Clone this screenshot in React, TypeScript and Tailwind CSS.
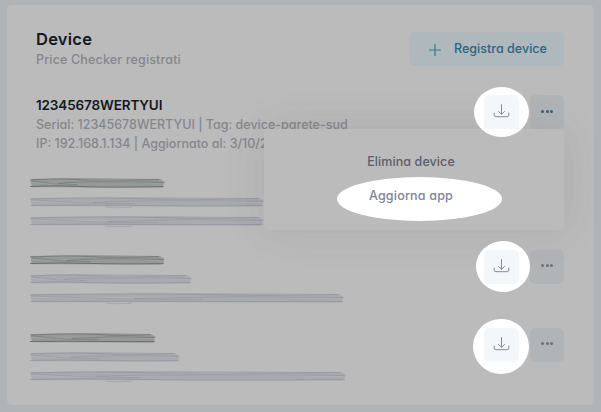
import React from "react";

type Streak = { end: number; y: number; dark?: boolean; seed: number };

const streaks: Streak[][] = [
  [
    { end: 165, y: 178, dark: true, seed: 0 },
    { end: 264, y: 198, seed: 1 },
    { end: 264, y: 216, seed: 2 },
  ],
  [
    { end: 165, y: 255, dark: true, seed: 1 },
    { end: 192, y: 275, seed: 0 },
    { end: 344, y: 294, seed: 2 },
  ],
  [
    { end: 156, y: 333, dark: true, seed: 2 },
    { end: 180, y: 353, seed: 1 },
    { end: 346, y: 371, seed: 0 },
  ],
];

/* Redacted line, brushed over with a few overlapping strokes. */
function Scribble({ end, dark, seed }: Streak) {
  const w = end - 30;
  const base = dark ? "#8f9392" : "#a5a7ab";
  const line = dark ? "#5b605e" : "#868993";
  const light = dark ? "#a0a5a4" : "#b1b3b7";
  const m = w * (0.35 + seed * 0.1);
  return (
    <svg width={w} height="13" viewBox={`0 0 ${w} 13`} className="block overflow-visible" fill="none">
      <g className="blur-[0.4px]">
        <path d={`M0 1 L${m} 0 L${w - 5} 1 L${w} 4 L${w - 3} 9.4 L2 9.2 L1 5Z`} fill={base} opacity="0.85" />
        <path d={`M1 2 Q${m * 0.6} 0 ${m} 1.6 T${w - 6} 1.5`} stroke={line} opacity="0.5" />
        <path d={`M2 4 Q${m * 0.5} ${8 - seed} ${m} 4.5 T${w - 4} 5.5`} stroke={light} strokeWidth="1.6" opacity="0.8" />
        <path d={`M${m * 0.6} 5.5 Q${m * 1.2} 2.5 ${w - 2} 4.5`} stroke={line} opacity="0.5" />
        <path d={`M0 8.5 Q${m * 0.5} ${7 + seed * 0.5} ${m} 8.4 T${w - 1} 8.6`} stroke={line} opacity={dark ? 0.75 : 0.5} />
        <path d={`M2 3 Q${m * 0.5} 7 ${m} 6.5`} stroke={line} opacity="0.4" />
        {w > 200 && <path d={`M75 10 Q88 11.5 102 10.2`} stroke={line} opacity="0.4" />}
      </g>
    </svg>
  );
}

function DownloadIcon() {
  return (
    <svg width="17" height="16" viewBox="0 0 17 16" fill="none" stroke="#858c99" strokeWidth="1" strokeLinecap="round" strokeLinejoin="round">
      <path d="M8.5 1.5V11M5.5 8.5L8.5 11.2L11.5 8.5" />
      <path d="M1.2 10V12Q1.2 13.7 2.9 13.7H14.1Q15.8 13.7 15.8 12V10" />
    </svg>
  );
}

function Actions({ spot, active }: { spot: string; active?: boolean }) {
  return (
    <div className="flex gap-[11px]">
      <div className="relative z-20 h-[34px] w-[35px]">
        <span className={`absolute rounded-[50%] bg-white ${spot}`} />
        <button className={`relative flex h-full w-full items-center justify-center bg-[#f4f7fa] pb-[2px] ${active ? "rounded-t-[5px]" : "rounded-[5px]"}`}>
          <DownloadIcon />
        </button>
      </div>
      <button className={`flex h-[34px] w-[34px] items-center justify-center gap-[1.5px] rounded-[5px] bg-[#b1b4b7] ${active ? "pb-[1px]" : "pb-[3px]"}`}>
        {[0, 1, 2].map((n) => (
          <span key={n} className={`h-[3px] w-[3px] rounded-full ${active ? "bg-[#2c6380]" : "bg-[#6b707a]"}`} />
        ))}
      </button>
    </div>
  );
}

export default function App() {
  return (
    <main className="h-[412px] w-[601px] overflow-hidden bg-[#b0b4b7] pl-[7px] pt-[5px] font-['Inter',sans-serif] [font-feature-settings:'cv11']">
      <section className="relative h-[400px] w-[587px] rounded-[5px] bg-[#bbbbbb] pl-[29px] pr-[30px] pt-[27px]">
        <header className="flex h-[63px] items-start justify-between">
          <div className="whitespace-nowrap">
            <h1 className="-mt-[3px] text-[16.5px] font-semibold leading-[21px] tracking-[0.25px] text-[#14191f]">Device</h1>
            <p className="text-[12.5px] font-medium leading-[19px] tracking-[0.16px] text-[#85868c]">Price Checker registrati</p>
          </div>
          <button className="flex h-[34px] w-[155px] items-center whitespace-nowrap rounded-[5px] bg-[#afb8bc] pl-[20px] text-[12.5px] font-medium tracking-[0.03px] text-[#2a6584]">
            <svg width="12" height="12" viewBox="0 0 12 12" className="mr-[13px] mt-[1px] shrink-0" stroke="#2a7896" strokeWidth="1.2">
              <path d="M0 6H12M6 0V12" />
            </svg>
            Registra device
          </button>
        </header>

        <div className="flex h-[78px] justify-between">
          <div className="whitespace-nowrap">
            <h2 className="text-[13.5px] font-semibold leading-[20px] tracking-[-0.13px] text-[#14191f]">12345678WERTYUI</h2>
            <p className="text-[12.5px] font-medium leading-[19px] text-[#85868c]">Serial: 12345678WERTYUI | Tag: device-parete-sud</p>
            <p className="text-[12.5px] font-medium leading-[19px] text-[#85868c]">IP: 192.168.1.134 | Aggiornato al: 3/10/2023</p>
          </div>
          <Actions active spot="-left-[10px] -top-[8px] h-[50px] w-[55px]" />
        </div>

        {streaks.map((lines, i) => (
          <div key={i} className={`flex justify-between ${i === 0 ? "h-[77px]" : "h-[78px]"}`}>
            <div className="-ml-[6px] flex flex-col gap-[6px] pt-[5px]">
              {lines.map((l) => (
                <Scribble key={l.y} {...l} />
              ))}
            </div>
            {i > 0 && <Actions spot={i === 1 ? "-left-[8px] -top-[9px] h-[51px] w-[54px]" : "-left-[11px] -top-[9px] h-[55px] w-[56px]"} />}
          </div>
        ))}

        <div className="absolute left-[257px] top-[124px] z-10 flex h-[101px] w-[300px] flex-col items-center rounded-[5px] rounded-tl-none bg-[#bbbbbb] pt-[23px] shadow-[0_0_42px_rgba(72,67,82,0.12)]">
          <span className="mr-[6px] whitespace-nowrap text-[12.5px] font-medium leading-[20px] tracking-[0.09px] text-[#5d5e69]">Elimina device</span>
          <div className="ml-[11px] mt-[5px] flex h-[44px] w-[165px] shrink-0 justify-center rounded-[50%] bg-white pr-[17px] pt-[9px]">
            <span className="whitespace-nowrap text-[12.5px] font-medium leading-[20px] tracking-[0.2px] text-[#7e8299]">Aggiorna app</span>
          </div>
        </div>
      </section>
    </main>
  );
}
